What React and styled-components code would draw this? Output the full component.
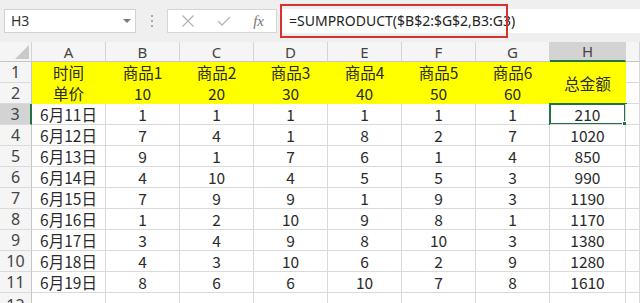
import React from 'react';
import styled, { createGlobalStyle } from 'styled-components';

const GlobalStyle = createGlobalStyle`
  html, body {
    margin: 0;
    padding: 0;
    background: #ffffff;
  }
  body {
    width: 640px;
    height: 303px;
    overflow: hidden;
    font-family: "Noto Sans CJK SC", "Noto Sans", sans-serif;
  }
`;

const columns = ['A', 'B', 'C', 'D', 'E', 'F', 'G', 'H', ''];

const rows = [
  ['6月11日', 1, 1, 1, 1, 1, 1, 210],
  ['6月12日', 7, 4, 1, 8, 2, 7, 1020],
  ['6月13日', 9, 1, 7, 6, 1, 4, 850],
  ['6月14日', 4, 10, 4, 5, 5, 3, 990],
  ['6月15日', 7, 9, 9, 1, 9, 3, 1190],
  ['6月16日', 1, 2, 10, 9, 8, 1, 1170],
  ['6月17日', 3, 4, 9, 8, 10, 3, 1380],
  ['6月18日', 4, 3, 10, 6, 2, 9, 1280],
  ['6月19日', 8, 6, 6, 10, 7, 8, 1610],
];

const App = () => {
  return (
    <>
      <GlobalStyle />
      <Toolbar>
        <NameBox>
          <span>H3</span>
          <Caret />
        </NameBox>
        <Grip>
          <i />
          <i />
          <i />
        </Grip>
        <ActionBox>
          <svg width="14" height="14" viewBox="0 0 14 14">
            <path d="M1.5 1.5 L12.5 12.5 M12.5 1.5 L1.5 12.5" stroke="#b4b4b4" strokeWidth="1.3" fill="none" />
          </svg>
          <svg width="16" height="14" viewBox="0 0 16 14">
            <path d="M2 7 L6 11 L14 3" stroke="#b4b4b4" strokeWidth="1.3" fill="none" />
          </svg>
          <Fx>fx</Fx>
        </ActionBox>
        <FormulaBox>
          <FormulaText>=SUMPRODUCT($B$2:$G$2,B3:G3)</FormulaText>
          <RedFrame />
        </FormulaBox>
      </Toolbar>

      <Sheet>
        <Corner>
          <svg width="14" height="14" viewBox="0 0 14 14">
            <path d="M14 0 L14 14 L0 14 Z" fill="#c9c9c9" />
          </svg>
        </Corner>
        {columns.map((c, i) => (
          <ColHeader key={`h${i}`} $active={c === 'H'}>
            {c}
          </ColHeader>
        ))}

        <RowHeader>1</RowHeader>
        <Cell $fill>时间</Cell>
        {[1, 2, 3, 4, 5, 6].map(n => (
          <Cell key={`p${n}`} $fill>
            商品{n}
          </Cell>
        ))}
        <Cell $fill $span={2}>
          总金额
        </Cell>
        <Cell />

        <RowHeader>2</RowHeader>
        <Cell $fill>单价</Cell>
        {[10, 20, 30, 40, 50, 60].map(n => (
          <Cell key={`u${n}`} $fill>
            {n}
          </Cell>
        ))}
        <Cell />

        {rows.map((r, ri) => (
          <React.Fragment key={`r${ri}`}>
            <RowHeader $active={ri === 0}>{ri + 3}</RowHeader>
            {r.map((v, ci) => (
              <Cell key={ci} $selected={ri === 0 && ci === 7}>
                {v}
                {ri === 0 && ci === 7 ? <Handle /> : null}
              </Cell>
            ))}
            <Cell />
          </React.Fragment>
        ))}

        <RowHeader $top>12</RowHeader>
        {columns.map((c, i) => (
          <Cell key={`e${i}`} />
        ))}
      </Sheet>
    </>
  );
};

export default App;

const Toolbar = styled.div`
  display: flex;
  align-items: center;
  height: 42px;
  background: #efefef;
  padding-left: 4px;
  box-sizing: border-box;
`;

const NameBox = styled.div`
  display: flex;
  align-items: center;
  justify-content: space-between;
  width: 132px;
  height: 24px;
  box-sizing: border-box;
  background: #ffffff;
  border: 1px solid #d2d2d2;
  padding: 0 4px 0 6px;
  font-family: "Noto Sans", sans-serif;
  font-size: 14px;
  line-height: 18px;
  color: #333;
`;

const Caret = styled.div`
  width: 0;
  height: 0;
  border-left: 4px solid transparent;
  border-right: 4px solid transparent;
  border-top: 4px solid #7a7a7a;
`;

const Grip = styled.div`
  display: flex;
  flex-direction: column;
  align-items: center;
  gap: 3px;
  width: 31px;

  i {
    display: block;
    width: 2px;
    height: 2px;
    background: #a8a8a8;
  }
`;

const ActionBox = styled.div`
  display: flex;
  align-items: center;
  justify-content: space-between;
  width: 110px;
  height: 24px;
  box-sizing: border-box;
  background: #ffffff;
  border: 1px solid #d6d6d6;
  padding: 0 12px 0 13px;
`;

const Fx = styled.span`
  font-family: "Liberation Serif", serif;
  font-style: italic;
  font-size: 15px;
  line-height: 18px;
  color: #777;
`;

const FormulaBox = styled.div`
  position: relative;
  flex: 1;
  display: flex;
  align-items: center;
  height: 24px;
  margin-left: 3px;
  background: #ffffff;
  padding-left: 9px;
`;

const FormulaText = styled.span`
  font-family: "Noto Sans", sans-serif;
  font-size: 14px;
  line-height: 18px;
  color: #222;
  white-space: nowrap;
`;

const RedFrame = styled.div`
  position: absolute;
  left: 0;
  top: -5px;
  width: 228px;
  height: 34px;
  box-sizing: border-box;
  border: 2px solid #d8322c;
`;

const Sheet = styled.div`
  display: grid;
  grid-template-columns: 32px repeat(7, 74px) 76px 1fr;
  grid-template-rows: 20px repeat(12, 21px);
  overflow: hidden;
  height: 261px;
  font-family: "Noto Sans CJK SC", "Noto Sans", sans-serif;
`;

const Corner = styled.div`
  display: flex;
  align-items: flex-end;
  justify-content: flex-end;
  padding: 0 2px 2px 0;
  background: #f5f5f5;
  border-right: 1px solid #d4d4d4;
  border-bottom: 1px solid #c6c6c6;
`;

const ColHeader = styled.div`
  display: flex;
  align-items: center;
  justify-content: center;
  background: ${({ $active }) => ($active ? '#d3d3d3' : '#f5f5f5')};
  border-right: 1px solid #d4d4d4;
  border-bottom: ${({ $active }) => ($active ? '2px solid #217346' : '1px solid #c6c6c6')};
  font-family: "Noto Sans", sans-serif;
  font-size: 15px;
  line-height: 18px;
  color: #444;
`;

const RowHeader = styled.div`
  display: flex;
  align-items: ${({ $top }) => ($top ? 'flex-start' : 'center')};
  justify-content: center;
  background: ${({ $active }) => ($active ? '#d3d3d3' : '#f5f5f5')};
  border-right: ${({ $active }) => ($active ? '2px solid #217346' : '1px solid #c6c6c6')};
  border-bottom: 1px solid #dadada;
  font-family: "Noto Sans", sans-serif;
  font-size: 16px;
  line-height: 18px;
  padding-top: ${({ $top }) => ($top ? '3px' : '0')};
  color: #444;
`;

const Cell = styled.div`
  position: relative;
  display: flex;
  align-items: center;
  justify-content: center;
  grid-row: ${({ $span }) => ($span ? `span ${$span}` : 'auto')};
  background: ${({ $fill }) => ($fill ? '#ffff00' : '#ffffff')};
  border-right: 1px solid ${({ $fill }) => ($fill ? '#ffff00' : '#dadada')};
  border-bottom: 1px solid ${({ $fill }) => ($fill ? '#ffff00' : '#dadada')};
  box-shadow: ${({ $selected }) => ($selected ? '0 0 0 1px #217346, inset 0 0 0 1px #217346' : 'none')};
  font-size: 15.5px;
  line-height: 18px;
  color: #2a2a2a;
  white-space: nowrap;
`;

const Handle = styled.div`
  position: absolute;
  right: -4px;
  bottom: -4px;
  width: 5px;
  height: 5px;
  background: #217346;
  border: 1px solid #ffffff;
`;
